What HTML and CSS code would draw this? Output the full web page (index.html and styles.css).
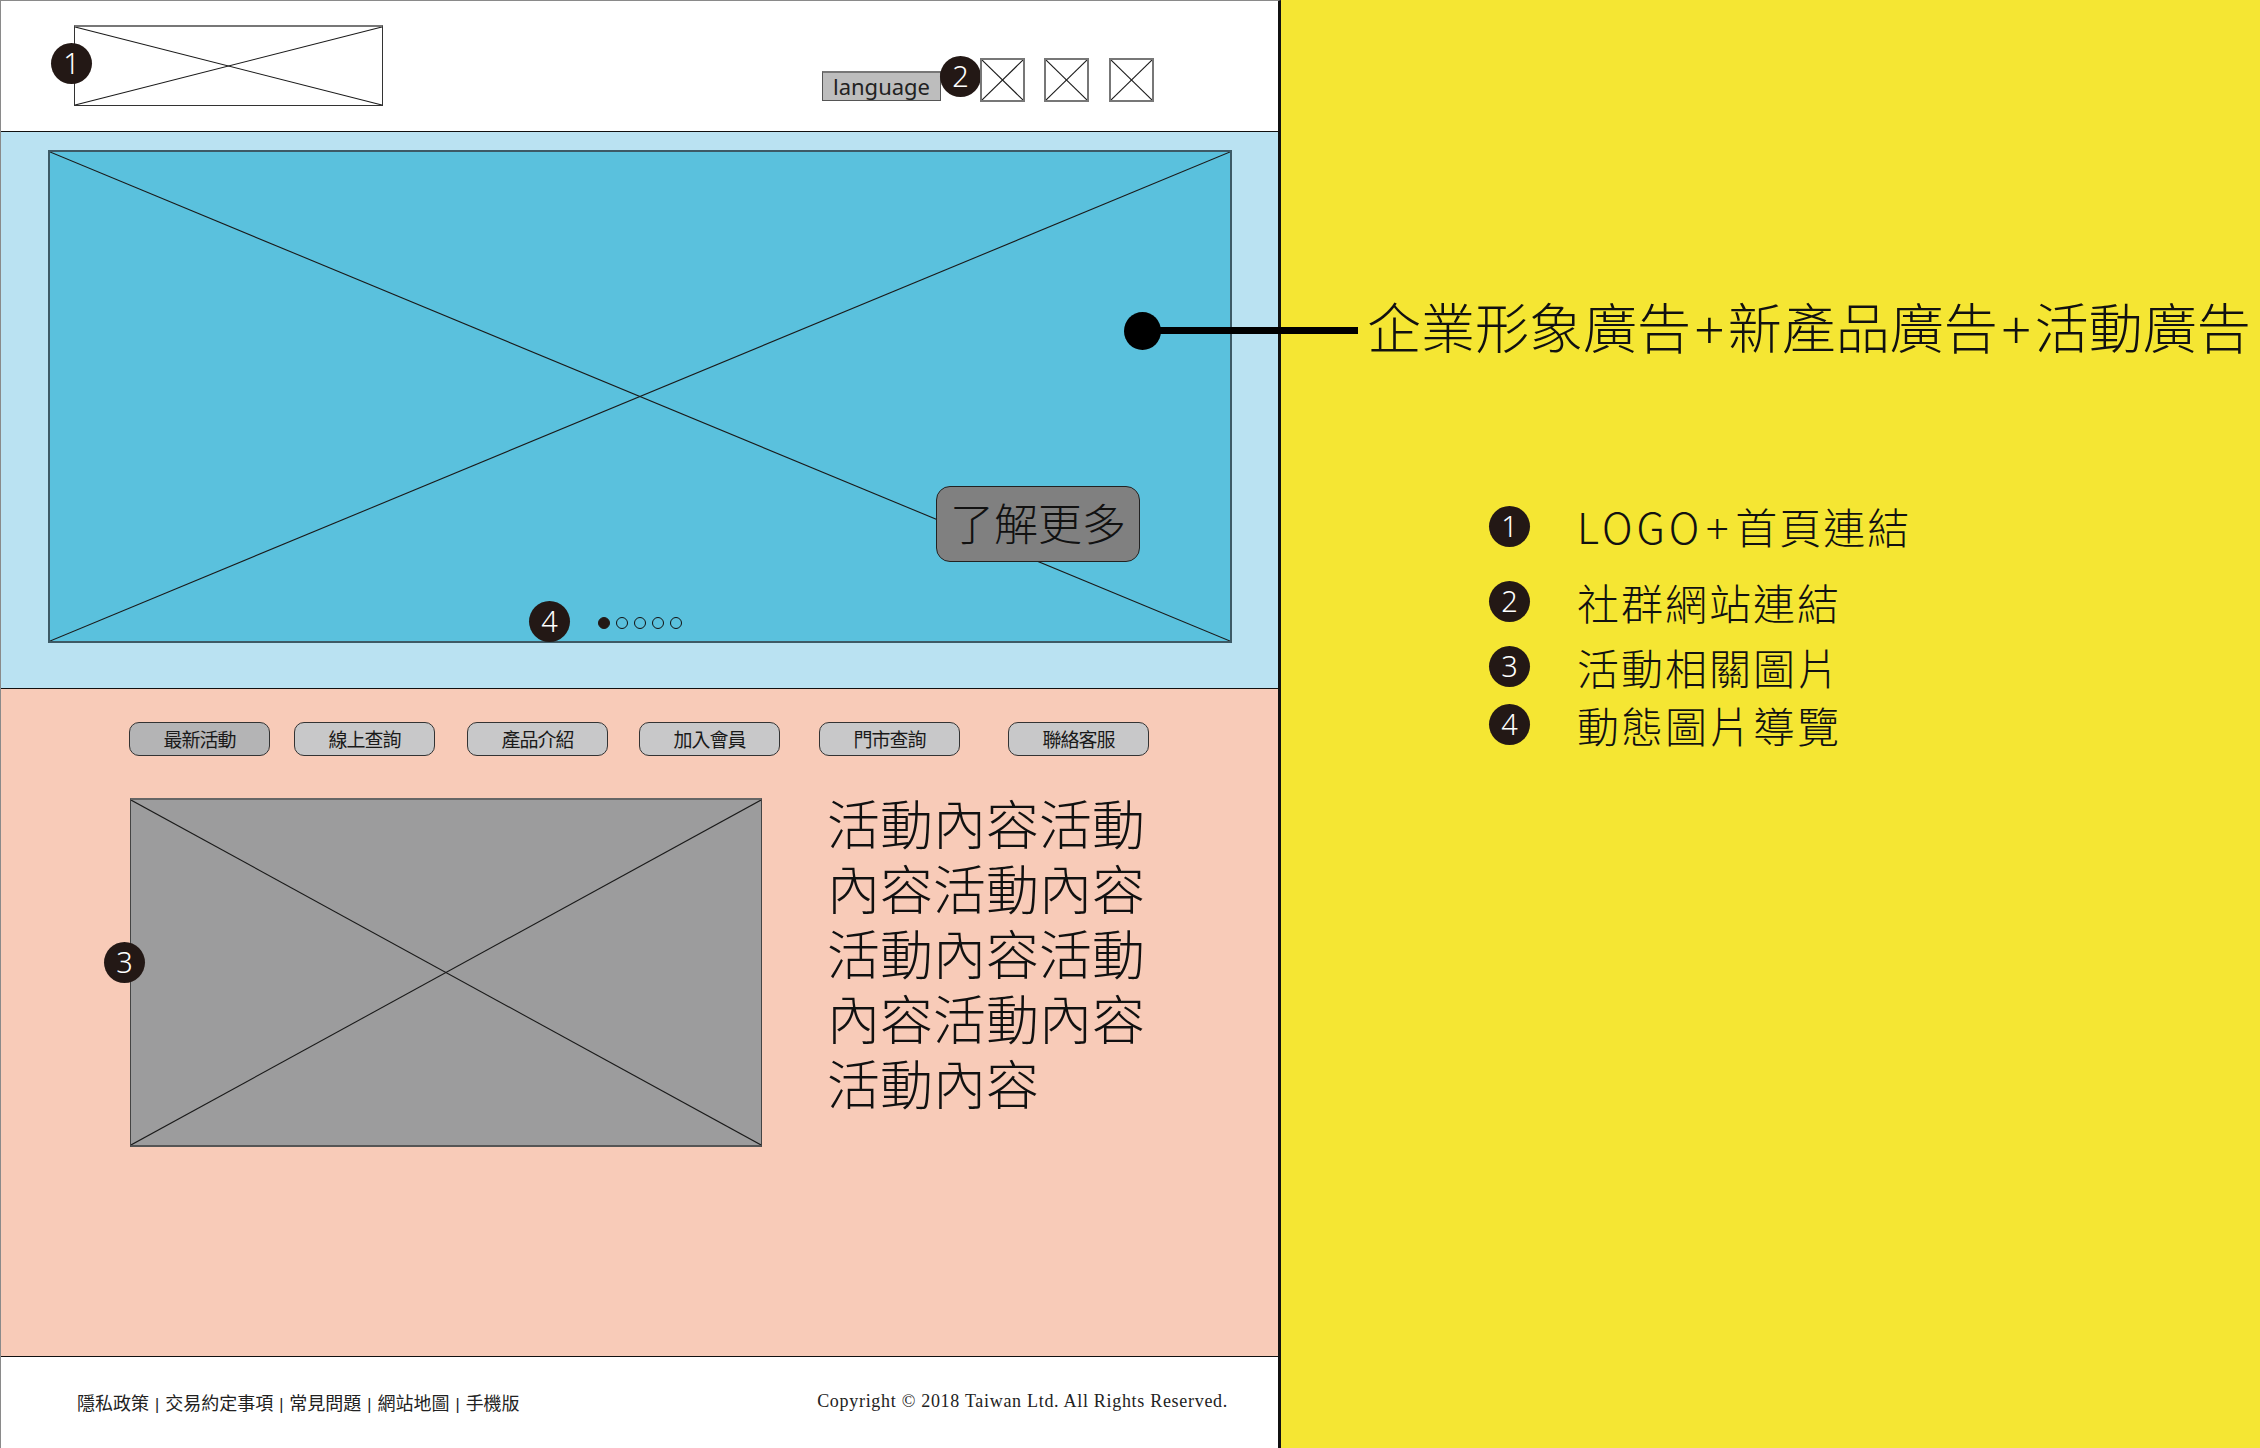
FILE: index.html
```html
<!DOCTYPE html>
<html lang="zh-Hant">
<head>
<meta charset="utf-8">
<title>Wireframe</title>
<link rel="stylesheet" href="styles.css">
</head>
<body>
<div class="page">
  <div class="wire">
    <header class="hdr">
      <div class="logo">
        <svg class="xfill" viewBox="0 0 100 100" preserveAspectRatio="none"><line x1="0" y1="0" x2="100" y2="100"/><line x1="100" y1="0" x2="0" y2="100"/></svg>
        <span class="badge badge-logo">1</span>
      </div>
      <div class="tools">
        <div class="lang">language</div>
        <span class="badge badge-social">2</span>
        <div class="icon"><svg class="xfill" viewBox="0 0 100 100" preserveAspectRatio="none"><line x1="0" y1="0" x2="100" y2="100"/><line x1="100" y1="0" x2="0" y2="100"/></svg></div>
        <div class="icon"><svg class="xfill" viewBox="0 0 100 100" preserveAspectRatio="none"><line x1="0" y1="0" x2="100" y2="100"/><line x1="100" y1="0" x2="0" y2="100"/></svg></div>
        <div class="icon"><svg class="xfill" viewBox="0 0 100 100" preserveAspectRatio="none"><line x1="0" y1="0" x2="100" y2="100"/><line x1="100" y1="0" x2="0" y2="100"/></svg></div>
      </div>
    </header>

    <section class="hero">
      <div class="hero-box">
        <svg class="xfill" viewBox="0 0 100 100" preserveAspectRatio="none"><line x1="0" y1="0" x2="100" y2="100"/><line x1="100" y1="0" x2="0" y2="100"/></svg>
        <div class="more">了解更多</div>
        <div class="pager">
          <span class="badge">4</span>
          <div class="dots">
            <span class="dot on"></span><span class="dot"></span><span class="dot"></span><span class="dot"></span><span class="dot"></span>
          </div>
        </div>
      </div>
    </section>

    <section class="events">
      <nav class="nav">
        <div class="nbtn first">最新活動</div>
        <div class="nbtn">線上查詢</div>
        <div class="nbtn">產品介紹</div>
        <div class="nbtn">加入會員</div>
        <div class="nbtn">門市查詢</div>
        <div class="nbtn">聯絡客服</div>
      </nav>
      <div class="content">
        <div class="photo">
          <svg class="xfill" viewBox="0 0 100 100" preserveAspectRatio="none"><line x1="0" y1="0" x2="100" y2="100"/><line x1="100" y1="0" x2="0" y2="100"/></svg>
          <span class="badge badge-photo">3</span>
        </div>
        <p class="desc">活動內容活動內容活動內容活動內容活動內容活動內容活動內容</p>
      </div>
    </section>

    <footer class="ftr">
      <div class="links">隱私政策<span class="sep">|</span>交易約定事項<span class="sep">|</span>常見問題<span class="sep">|</span>網站地圖<span class="sep">|</span>手機版</div>
      <div class="copy">Copyright © 2018 Taiwan Ltd. All Rights Reserved.</div>
    </footer>
  </div>

  <aside class="notes">
    <h1 class="title">企業形象廣告<span class="plus">+</span>新產品廣告<span class="plus">+</span>活動廣告</h1>
    <ul class="legend">
      <li class="row r1"><span class="badge">1</span><span class="ltxt"><span class="latin">LOGO</span><span class="lplus">+</span>首頁連結</span></li>
      <li class="row r2"><span class="badge">2</span><span class="ltxt">社群網站連結</span></li>
      <li class="row r3"><span class="badge">3</span><span class="ltxt">活動相關圖片</span></li>
      <li class="row r4"><span class="badge">4</span><span class="ltxt">動態圖片導覽</span></li>
    </ul>
  </aside>

  <span class="callout-dot"></span>
  <span class="callout-line"></span>
</div>
</body>
</html>
```

FILE: styles.css
```css
* { box-sizing: border-box; }
html, body { margin: 0; padding: 0; }
body {
  width: 2260px;
  height: 1448px;
  overflow: hidden;
  background: #f5e633;
  font-family: "Noto Sans CJK TC", "Noto Sans", sans-serif;
  color: #111;
}
.page {
  position: relative;
  display: flex;
  width: 2260px;
  height: 1448px;
}

/* placeholder crosses */
.xfill { display: block; width: 100%; height: 100%; }
.xfill line { stroke: #1a1a1a; stroke-width: 1.1; vector-effect: non-scaling-stroke; }

/* badges */
.badge {
  flex: none;
  width: 41px;
  height: 41px;
  border-radius: 50%;
  background: #231815;
  color: #fff;
  display: flex;
  align-items: center;
  justify-content: center;
  font-family: "Noto Sans", "Open Sans", sans-serif;
  font-weight: 300;
  font-size: 29px;
  line-height: 1;
  padding-bottom: 2px;
}

/* left wireframe */
.wire {
  width: 1281px;
  flex: none;
  display: flex;
  flex-direction: column;
  background: #fff;
  border-left: 1px solid #8a8a8a;
  border-top: 1px solid #8a8a8a;
  border-right: 3px solid #111;
}

.hdr {
  height: 131px;
  flex: none;
  border-bottom: 1px solid #111;
  display: flex;
  align-items: flex-start;
  padding-left: 73px;
  padding-right: 124px;
}
.logo {
  position: relative;
  margin-top: 24px;
  width: 309px;
  height: 81px;
  border: 1px solid #333;
  border-top: 2px solid #777;
}
.badge-logo { position: absolute; left: -24px; top: 16px; }

.tools {
  margin-left: auto;
  margin-top: 55px;
  height: 46px;
  display: flex;
  align-items: flex-end;
}
.lang {
  width: 119px;
  height: 30px;
  background: #bdbdbd;
  border: 1px solid #555;
  border-top: 2px solid #777;
  font-family: "Noto Sans", sans-serif;
  font-size: 22px;
  line-height: 26px;
  color: #222;
  text-align: center;
  margin-bottom: 1px;
}
.badge-social { align-self: flex-start; margin-left: -1px; }
.icon {
  width: 45px;
  height: 44px;
  border: 2px solid #777;
  margin-left: 19px;
}
.badge-social + .icon { margin-left: -1px; }
.icon:last-child { margin-left: 20px; }

/* hero */
.hero {
  height: 557px;
  flex: none;
  background: #bae2f2;
  border-bottom: 1px solid #111;
  padding: 18px 0 0 47px;
}
.hero-box {
  position: relative;
  width: 1184px;
  height: 493px;
  background: #5ac1dd;
  border: 2px solid #3d5a66;
}
.more {
  position: absolute;
  left: 886px;
  top: 334px;
  width: 204px;
  height: 76px;
  border-radius: 14px;
  background: #808080;
  border: 1.5px solid #222;
  display: flex;
  align-items: center;
  justify-content: center;
  font-size: 44px;
  font-weight: 300;
  color: #111;
  padding-bottom: 4px;
}
.pager {
  position: absolute;
  left: 479px;
  top: 449px;
  display: flex;
  align-items: center;
}
.dots {
  display: flex;
  gap: 6px;
  margin-left: 28px;
  margin-top: 3px;
}
.dot {
  width: 12px;
  height: 12px;
  border-radius: 50%;
  border: 1.5px solid #111;
}
.dot.on { background: #231815; border-color: #231815; }

/* events */
.events {
  height: 668px;
  flex: none;
  background: #f8cbb8;
  border-bottom: 1px solid #111;
  padding: 33px 0 0 128px;
}
.nav { display: flex; }
.nbtn {
  width: 141px;
  height: 34px;
  border-radius: 10px;
  border: 1.5px solid #333;
  background: #c8c8c9;
  color: #1a1a1a;
  font-size: 19px;
  display: flex;
  align-items: center;
  justify-content: center;
  letter-spacing: -1px;
  padding-bottom: 1px;
}
.nbtn.first { background: #b4b4b5; }
.nbtn:nth-child(2) { margin-left: 24px; }
.nbtn:nth-child(3) { margin-left: 32px; }
.nbtn:nth-child(4) { margin-left: 31px; }
.nbtn:nth-child(5) { margin-left: 39px; }
.nbtn:nth-child(6) { margin-left: 48px; }

.content {
  display: flex;
  align-items: flex-start;
  margin-top: 42px;
  padding-left: 1px;
}
.photo {
  position: relative;
  flex: none;
  width: 632px;
  height: 349px;
  background: #9c9c9d;
  border: 1px solid #444;
  border-top: 2px solid #666;
  border-bottom: 2px solid #555;
}
.badge-photo { position: absolute; left: -27px; top: 142px; }
.desc {
  margin: -8px 0 0 65px;
  width: 330px;
  font-size: 53px;
  font-weight: 300;
  line-height: 65px;
  color: #111;
}

/* footer */
.ftr {
  flex: 1;
  display: flex;
  align-items: center;
  padding: 0 50px 2px 76px;
}
.links {
  font-size: 18px;
  color: #222;
}
.sep { margin: 0 6px; font-family: "Liberation Sans", sans-serif; font-size: 16px; }
.copy {
  margin-left: auto;
  font-family: "Liberation Serif", serif;
  font-size: 18px;
  letter-spacing: 0.7px;
  color: #222;
}

/* notes */
.notes {
  flex: 1;
  padding: 299px 0 0 86px;
}
.title {
  margin: 0;
  font-size: 54px;
  font-weight: 300;
  line-height: 54px;
  white-space: nowrap;
  color: #111;
}
.plus { font-family: "Noto Sans", sans-serif; margin: 0 3px; }
.legend {
  list-style: none;
  margin: 151px 0 0 122px;
  padding: 0;
}
.row {
  display: flex;
  align-items: center;
  height: 41px;
  gap: 47px;
}
.r2 { margin-top: 34px; }
.r3 { margin-top: 24px; }
.r4 { margin-top: 17px; }
.ltxt {
  font-size: 42px;
  font-weight: 300;
  letter-spacing: 2px;
  line-height: 41px;
  white-space: nowrap;
  color: #111;
}
.latin { letter-spacing: 4px; }
.lplus { font-family: "Noto Sans", sans-serif; margin: 0 4px 0 2px; }

/* callout pointer from hero to note */
.callout-dot {
  position: absolute;
  left: 1124px;
  top: 312px;
  width: 37px;
  height: 38px;
  border-radius: 50%;
  background: #000;
}
.callout-line {
  position: absolute;
  left: 1142px;
  top: 327px;
  width: 216px;
  height: 7px;
  background: #000;
}
```
